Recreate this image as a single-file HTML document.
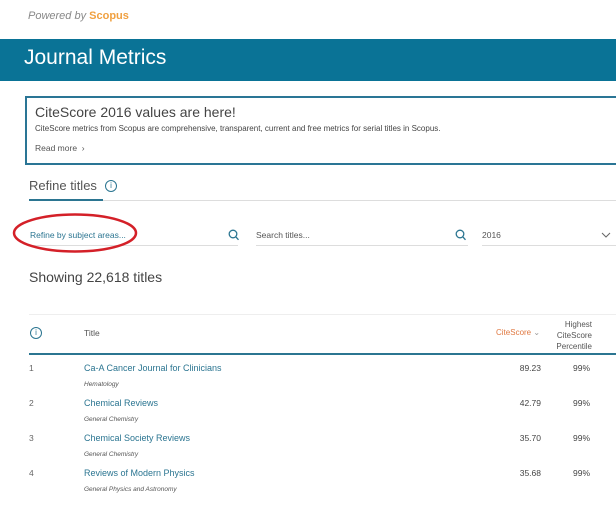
<!DOCTYPE html>
<html><head><meta charset="utf-8"><style>
*{margin:0;padding:0;box-sizing:border-box}
body{width:616px;height:497px;overflow:hidden;background:#fff;font-family:"Liberation Sans",sans-serif;color:#333;position:relative}
.a{position:absolute;white-space:nowrap}
.link{color:#2b7591}
</style></head><body>
<div class="a" style="left:28px;top:10px;font-size:11px;color:#888;font-style:italic">Powered by <span style="color:#f0a040;font-weight:bold;font-style:normal">Scopus</span></div>
<div class="a" style="left:0;top:39px;width:616px;height:42px;background:#0a7396"></div>
<div class="a" style="left:24px;top:46px;font-size:21px;color:#fff">Journal Metrics</div>
<div class="a" style="left:25px;top:96px;width:600px;height:69px;border:2px solid #2a7595"></div>
<div class="a" style="left:35px;top:104px;font-size:14px;color:#444">CiteScore 2016 values are here!</div>
<div class="a" style="left:35px;top:124px;font-size:8px;color:#444">CiteScore metrics from Scopus are comprehensive, transparent, current and free metrics for serial titles in Scopus.</div>
<div class="a" style="left:35px;top:143px;font-size:8.5px;color:#555">Read more &nbsp;›</div>
<div class="a" style="left:29px;top:178px;font-size:13px;color:#555">Refine titles</div>
<div class="a" style="left:105px;top:180px;width:12px;height:12px;border:1.3px solid #2b7591;border-radius:50%;font-size:8px;color:#2b7591;text-align:center;line-height:10px">i</div>
<div class="a" style="left:29px;top:200px;width:587px;height:1px;background:#ddd"></div>
<div class="a" style="left:29px;top:199px;width:74px;height:2px;background:#2b7591"></div>
<div class="a link" style="left:30px;top:230px;font-size:8.5px">Refine by subject areas...</div>
<div class="a" style="left:29px;top:245px;width:209px;height:1px;background:#ddd"></div>
<svg class="a" style="left:228px;top:229px" width="11" height="12"><circle cx="5" cy="5" r="3.8" fill="none" stroke="#2b7591" stroke-width="1.3"/><path d="M7.8 7.8L10.5 10.8" stroke="#2b7591" stroke-width="1.3"/></svg>
<div class="a" style="left:256px;top:230px;font-size:8.5px;color:#555">Search titles...</div>
<div class="a" style="left:256px;top:245px;width:212px;height:1px;background:#ddd"></div>
<svg class="a" style="left:455px;top:229px" width="11" height="12"><circle cx="5" cy="5" r="3.8" fill="none" stroke="#2b7591" stroke-width="1.3"/><path d="M7.8 7.8L10.5 10.8" stroke="#2b7591" stroke-width="1.3"/></svg>
<div class="a" style="left:482px;top:230px;font-size:8.5px;color:#555">2016</div>
<div class="a" style="left:482px;top:245px;width:134px;height:1px;background:#ddd"></div>
<svg class="a" style="left:601px;top:232px" width="10" height="6"><path d="M1 1L5 5L9 1" fill="none" stroke="#666" stroke-width="1"/></svg>
<svg class="a" style="left:0;top:0" width="616" height="497"><ellipse cx="75" cy="233" rx="61" ry="18.5" fill="none" stroke="#d42028" stroke-width="2.5"/></svg>
<div class="a" style="left:29px;top:269px;font-size:14px;color:#444">Showing 22,618 titles</div>
<div class="a" style="left:29px;top:314px;width:587px;height:1px;background:#eee"></div>
<div class="a" style="left:30px;top:327px;width:12px;height:12px;border:1.3px solid #2b7591;border-radius:50%;font-size:8px;color:#2b7591;text-align:center;line-height:10px">i</div>
<div class="a" style="left:84px;top:328px;font-size:8.5px;color:#555">Title</div>
<div class="a" style="left:496px;top:328px;font-size:8px;color:#e07840">CiteScore <span style="color:#999">&#8964;</span></div>
<div class="a" style="left:550px;top:319px;font-size:8px;color:#555;text-align:right;line-height:11px;width:42px">Highest<br>CiteScore<br>Percentile</div>
<div class="a" style="left:29px;top:353px;width:587px;height:2px;background:#2b7591"></div>
<div class="a" style="left:29px;top:351px;font-size:8.5px;color:#666;line-height:35px">1<br>2<br>3<br>4</div>
<div class="a" style="left:84px;top:351px;font-size:9px;line-height:35px"><span class="link">Ca-A Cancer Journal for Clinicians<br>Chemical Reviews<br>Chemical Society Reviews<br>Reviews of Modern Physics</span></div>
<div class="a" style="left:84px;top:367px;font-size:6.5px;font-style:italic;color:#555;line-height:35px">Hematology<br>General Chemistry<br>General Chemistry<br>General Physics and Astronomy</div>
<div class="a" style="left:500px;top:351px;font-size:8.5px;color:#444;line-height:35px;width:41px;text-align:right">89.23<br>42.79<br>35.70<br>35.68</div>
<div class="a" style="left:573px;top:351px;font-size:8.5px;color:#444;line-height:35px">99%<br>99%<br>99%<br>99%</div>
</body></html>
